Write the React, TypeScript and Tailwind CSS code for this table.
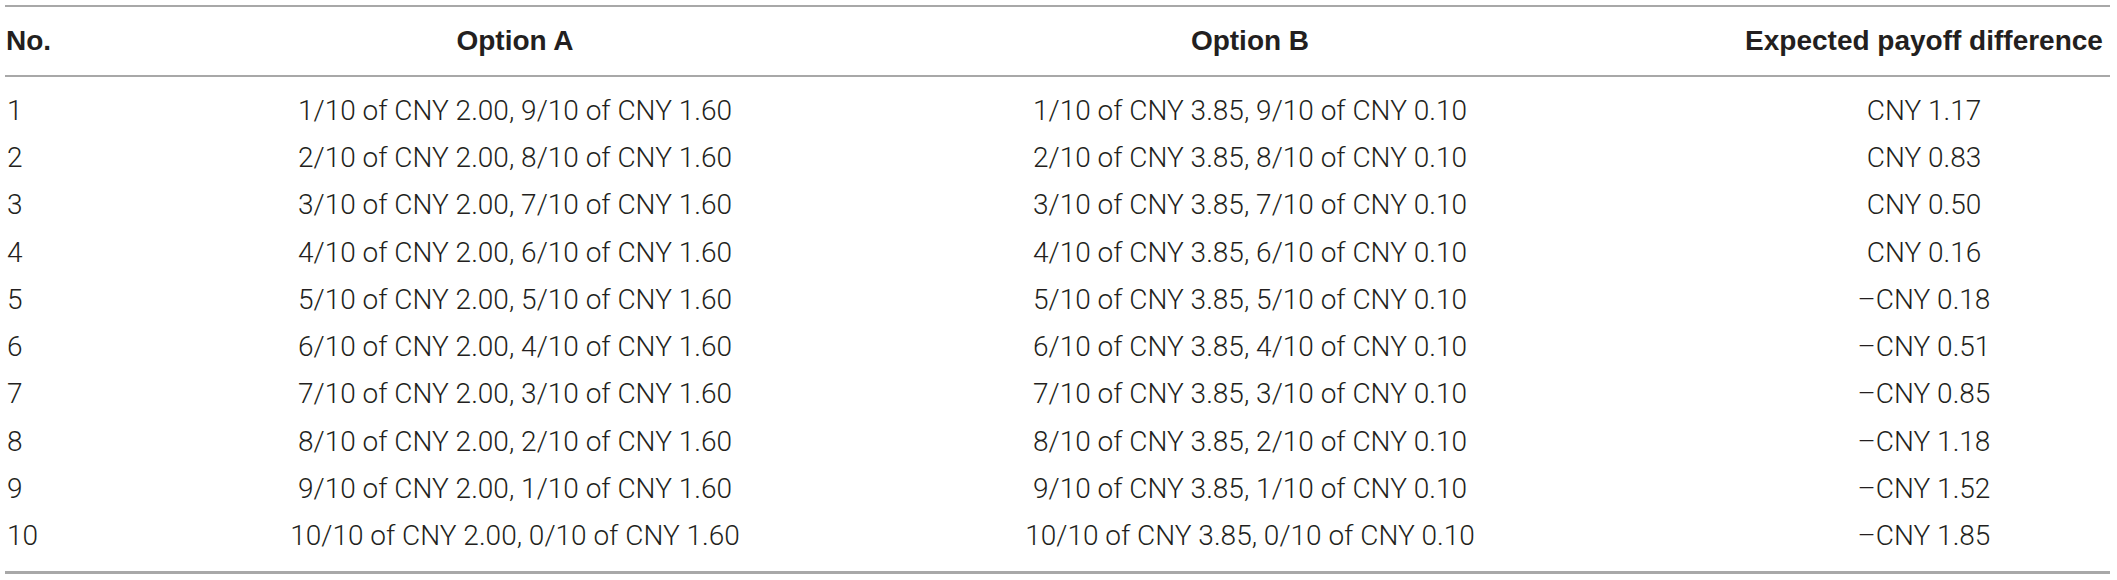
const rows = [
  ["1", "1/10 of CNY 2.00, 9/10 of CNY 1.60", "1/10 of CNY 3.85, 9/10 of CNY 0.10", "CNY 1.17"],
  ["2", "2/10 of CNY 2.00, 8/10 of CNY 1.60", "2/10 of CNY 3.85, 8/10 of CNY 0.10", "CNY 0.83"],
  ["3", "3/10 of CNY 2.00, 7/10 of CNY 1.60", "3/10 of CNY 3.85, 7/10 of CNY 0.10", "CNY 0.50"],
  ["4", "4/10 of CNY 2.00, 6/10 of CNY 1.60", "4/10 of CNY 3.85, 6/10 of CNY 0.10", "CNY 0.16"],
  ["5", "5/10 of CNY 2.00, 5/10 of CNY 1.60", "5/10 of CNY 3.85, 5/10 of CNY 0.10", "–CNY 0.18"],
  ["6", "6/10 of CNY 2.00, 4/10 of CNY 1.60", "6/10 of CNY 3.85, 4/10 of CNY 0.10", "–CNY 0.51"],
  ["7", "7/10 of CNY 2.00, 3/10 of CNY 1.60", "7/10 of CNY 3.85, 3/10 of CNY 0.10", "–CNY 0.85"],
  ["8", "8/10 of CNY 2.00, 2/10 of CNY 1.60", "8/10 of CNY 3.85, 2/10 of CNY 0.10", "–CNY 1.18"],
  ["9", "9/10 of CNY 2.00, 1/10 of CNY 1.60", "9/10 of CNY 3.85, 1/10 of CNY 0.10", "–CNY 1.52"],
  ["10", "10/10 of CNY 2.00, 0/10 of CNY 1.60", "10/10 of CNY 3.85, 0/10 of CNY 0.10", "–CNY 1.85"],
];

const cols = "grid grid-cols-[263px_494px_976px_372px]";

export default function App() {
  return (
    <div className="w-[2117px] h-[580px] bg-white pt-[5px] pl-[5px] text-[#231f20]">
      <div className="w-[2105px] border-t-2 border-[#a8a8a8]">
        {/* header */}
        <div
          className={`${cols} h-[70px] items-center border-b-2 border-[#a8a8a8] text-[28px] font-bold`}
          style={{ fontFamily: '"Liberation Sans", Arial, sans-serif' }}
        >
          <div className="pl-[1px]">No.</div>
          <div className="text-center">Option A</div>
          <div className="text-center">Option B</div>
          <div className="text-center">Expected payoff difference</div>
        </div>

        {/* body */}
        <div
          className="pt-[10px] pb-[11px] border-b-[3px] border-[#a8a8a8] text-[28px] font-light"
          style={{ fontFamily: 'Roboto, "Liberation Sans", sans-serif' }}
        >
          {rows.map((r) => (
            <div key={r[0]} className={`${cols} h-[47.3px] items-center`}>
              <div className="pl-[2px]">{r[0]}</div>
              <div className="text-center">{r[1]}</div>
              <div className="text-center">{r[2]}</div>
              <div className="text-center">{r[3]}</div>
            </div>
          ))}
        </div>
      </div>
    </div>
  );
}
